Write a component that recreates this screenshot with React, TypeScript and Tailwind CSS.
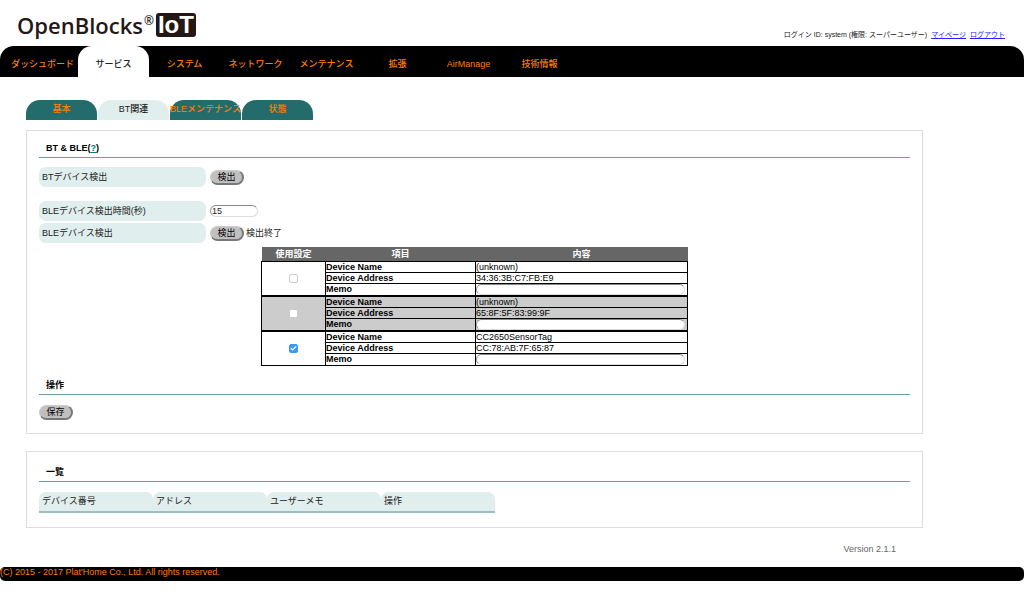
import { useState } from 'react'
import { Check } from 'lucide-react'

interface Device {
  id: number
  name: string
  address: string
  enabled: boolean
}

const mainMenu = ['ダッシュボード', 'サービス', 'システム', 'ネットワーク', 'メンテナンス', '拡張', 'AirManage', '技術情報']

const subMenu = ['基本', 'BT関連', 'BLEメンテナンス', '状態']

const listColumns = ['デバイス番号', 'アドレス', 'ユーザーメモ', '操作']

const foundDevices: Device[] = [
  { id: 1, name: '(unknown)', address: '34:36:3B:C7:FB:E9', enabled: false },
  { id: 2, name: '(unknown)', address: '65:8F:5F:83:99:9F', enabled: false },
  { id: 3, name: 'CC2650SensorTag', address: 'CC:78:AB:7F:65:87', enabled: true },
]

const buttonClass =
  'h-[15px] w-[34px] rounded-full border border-t-[#cccccc] border-l-[#cccccc] border-r-2 border-b-2 border-r-[#777777] border-b-[#777777] bg-[#c0c0c0] text-center leading-3 text-black'

const inputClass =
  'block rounded-full border border-t-[#888888] border-l-[#999999] border-r-[#dddddd] border-b-[#dddddd] bg-white'

const labelClass = 'flex h-5 w-[167px] items-center rounded-[7px] bg-[#e0eeee] pl-[3px]'

const cellClass = 'border border-black p-0 text-left align-middle'

function Logo() {
  return (
    <div className="flex items-center pt-[13px] pl-[17px] font-['Open_Sans',sans-serif] text-[#231815]">
      <span className="text-[22px] leading-6 font-semibold">OpenBlocks</span>
      <span className="ml-px self-start text-[12px] leading-4 font-semibold">®</span>
      <span className="ml-[2px] flex h-6 w-10 items-center justify-center rounded-[3px] bg-[#231815] font-['Liberation_Sans',sans-serif] text-[24px] leading-6 font-bold text-white">
        IoT
      </span>
    </div>
  )
}

function SectionTitle({ children }: { children: React.ReactNode }) {
  return <h2 className="border-b border-[#6f9f9f] pb-[3px] pl-[7px] leading-3 font-bold text-black">{children}</h2>
}

function DeviceRows({ device, shaded }: { device: Device; shaded: boolean }) {
  const [enabled, setEnabled] = useState(device.enabled)
  const memoId = `memo-${device.id}`

  return (
    <tbody className={shaded ? 'border-y-2 border-black bg-[#cccccc]' : 'bg-white'}>
      <tr className="h-[11px]">
        <td rowSpan={3} className={cellClass}>
          <div className="relative mx-auto size-[9px]">
            <input
              type="checkbox"
              aria-label="使用設定"
              checked={enabled}
              onChange={(e) => setEnabled(e.target.checked)}
              className={`block size-[9px] appearance-none rounded-[2px] border ${
                enabled ? 'border-[#3b99fc] bg-[#3b99fc]' : 'border-[#cccccc] bg-white'
              }`}
            />
            {enabled && (
              <Check className="pointer-events-none absolute inset-px size-[7px] text-white" strokeWidth={4} />
            )}
          </div>
        </td>
        <th className={cellClass}>Device Name</th>
        <td className={cellClass}>{device.name}</td>
      </tr>
      <tr className="h-[11px]">
        <th className={cellClass}>Device Address</th>
        <td className={cellClass}>{device.address}</td>
      </tr>
      <tr className="h-3">
        <th className={cellClass}>
          <label htmlFor={memoId}>Memo</label>
        </th>
        <td className={cellClass}>
          <input id={memoId} type="text" className={`${inputClass} h-[11px] w-[209px] px-1`} />
        </td>
      </tr>
    </tbody>
  )
}

export default function App() {
  const [seconds, setSeconds] = useState('15')

  return (
    <div className="bg-white font-['Liberation_Sans','Noto_Sans_CJK_JP',sans-serif] text-[9px] leading-[10px] text-[#222222]">
      <header className="flex h-[46px] items-start justify-between">
        <Logo />
        <div className="flex gap-1 self-end pr-[19px] pb-[6px] text-[7px] leading-[10px]">
          <span>ログイン ID: system (権限: スーパーユーザー)</span>
          <a href="#mypage" className="text-[#2222ff] underline">マイページ</a>
          <a href="#logout" className="text-[#2222ff] underline">ログアウト</a>
        </div>
      </header>

      <nav className="flex h-[31px] rounded-t-[14px] bg-black pl-[7px]">
        {mainMenu.map((item) => (
          <a
            key={item}
            href="#menu"
            className={`flex w-[71px] items-center justify-center rounded-t-[14px] pt-[5px] font-medium whitespace-nowrap ${
              item === 'サービス' ? 'bg-white text-[#222222]' : 'text-[#ff7f00]'
            }`}
          >
            {item}
          </a>
        ))}
      </nav>

      <main className="mr-[101px] ml-[26px] pt-[23px]">
        <nav className="flex gap-px">
          {subMenu.map((item) => (
            <a
              key={item}
              href="#submenu"
              className={`flex h-5 w-[71px] justify-center rounded-t-[14px] pt-1 font-medium whitespace-nowrap ${
                item === 'BT関連' ? 'bg-[#e0eeee] text-[#222222]' : 'bg-[#246b6b] text-[#ff7f00]'
              }`}
            >
              {item}
            </a>
          ))}
        </nav>

        <section className="mt-[10px] border border-[#dddddd] px-3 pt-[11px] pb-[13px]">
          <SectionTitle>
            BT &amp; BLE(<a href="#help" className="text-[#008080] underline">?</a>)
          </SectionTitle>

          <div className="mt-[9px] flex items-center gap-1">
            <span className={labelClass}>BTデバイス検出</span>
            <button type="button" className={buttonClass}>検出</button>
          </div>
          <div className="mt-[14px] flex items-center gap-1">
            <label htmlFor="scan-seconds" className={labelClass}>BLEデバイス検出時間(秒)</label>
            <input
              id="scan-seconds"
              type="text"
              value={seconds}
              onChange={(e) => setSeconds(e.target.value)}
              className={`${inputClass} h-3 w-12 pl-px`}
            />
          </div>
          <div className="mt-[2px] flex items-center gap-1">
            <span className={labelClass}>BLEデバイス検出</span>
            <div className="flex items-center gap-[2px]">
              <button type="button" className={buttonClass}>検出</button>
              <span>検出終了</span>
            </div>
          </div>

          <table className="mx-auto mt-1 w-[427px] table-fixed border-collapse text-black">
            <colgroup>
              <col className="w-16" />
              <col className="w-[150px]" />
              <col />
            </colgroup>
            <thead className="bg-[#666666] text-white">
              <tr className="h-[14px]">
                <th className="p-0">使用設定</th>
                <th className="p-0">項目</th>
                <th className="p-0">内容</th>
              </tr>
            </thead>
            {foundDevices.map((device, i) => (
              <DeviceRows key={device.id} device={device} shaded={i % 2 === 1} />
            ))}
          </table>

          <div className="mt-[13px]">
            <SectionTitle>操作</SectionTitle>
          </div>
          <button type="button" className={`${buttonClass} mt-[10px] block`}>保存</button>
        </section>

        <section className="mt-[17px] border border-[#dddddd] px-3 pt-[14px] pb-[14px]">
          <SectionTitle>一覧</SectionTitle>
          <table className="mt-[10px] w-[456px] table-fixed border-separate border-spacing-0">
            <thead>
              <tr className="h-[21px]">
                {listColumns.map((column) => (
                  <th key={column} className="border-b-2 border-[#9cbfbf] p-0 text-left font-normal">
                    <span className="flex h-[19px] items-center rounded-t-[7px] bg-[#e0eeee] pl-[3px]">{column}</span>
                  </th>
                ))}
              </tr>
            </thead>
          </table>
        </section>

        <p className="mt-4 pr-[27px] text-right text-[#666666]">Version 2.1.1</p>
      </main>

      <footer className="mt-[13px] h-[14px] rounded-[5px] bg-black text-[#ff7f00]">
        (C) 2015 - 2017 Plat'Home Co., Ltd. All rights reserved.
      </footer>
    </div>
  )
}
